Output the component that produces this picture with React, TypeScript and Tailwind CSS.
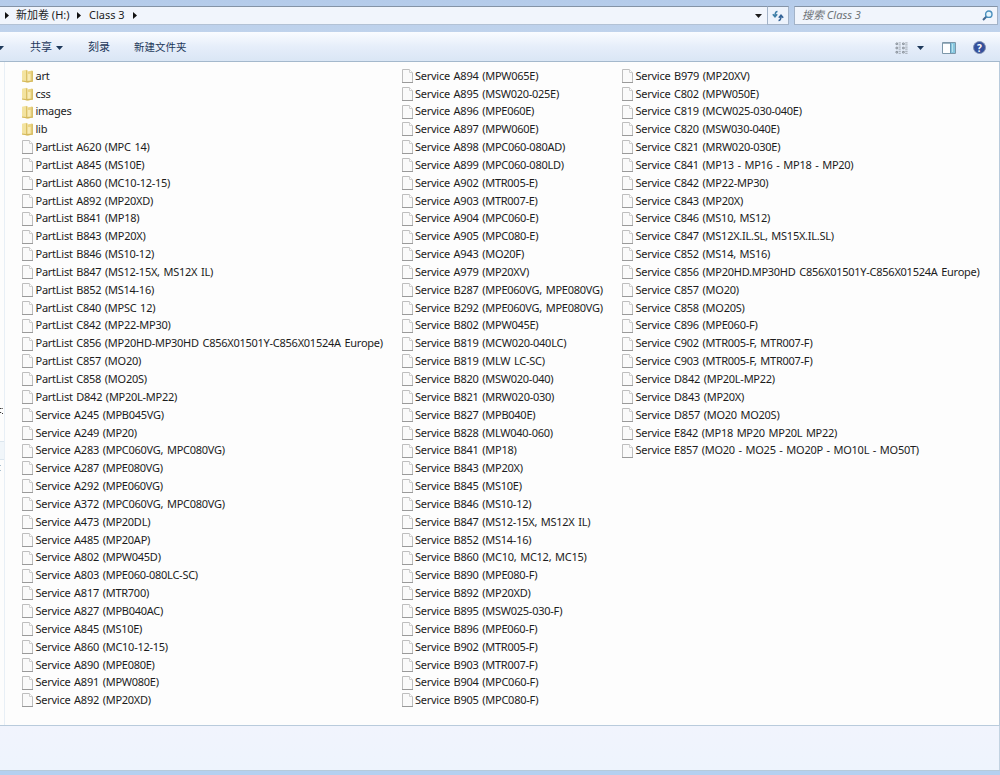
import { useState } from 'react'

const folders = ['art', 'css', 'images', 'lib']

const columns = [
  {
    width: 'w-[379.5px]',
    files: [
      'PartList A620 (MPC 14)',
      'PartList A845 (MS10E)',
      'PartList A860 (MC10-12-15)',
      'PartList A892 (MP20XD)',
      'PartList B841 (MP18)',
      'PartList B843 (MP20X)',
      'PartList B846 (MS10-12)',
      'PartList B847 (MS12-15X, MS12X IL)',
      'PartList B852 (MS14-16)',
      'PartList C840 (MPSC 12)',
      'PartList C842 (MP22-MP30)',
      'PartList C856 (MP20HD-MP30HD C856X01501Y-C856X01524A Europe)',
      'PartList C857 (MO20)',
      'PartList C858 (MO20S)',
      'PartList D842 (MP20L-MP22)',
      'Service A245 (MPB045VG)',
      'Service A249 (MP20)',
      'Service A283 (MPC060VG, MPC080VG)',
      'Service A287 (MPE080VG)',
      'Service A292 (MPE060VG)',
      'Service A372 (MPC060VG, MPC080VG)',
      'Service A473 (MP20DL)',
      'Service A485 (MP20AP)',
      'Service A802 (MPW045D)',
      'Service A803 (MPE060-080LC-SC)',
      'Service A817 (MTR700)',
      'Service A827 (MPB040AC)',
      'Service A845 (MS10E)',
      'Service A860 (MC10-12-15)',
      'Service A890 (MPE080E)',
      'Service A891 (MPW080E)',
      'Service A892 (MP20XD)',
    ],
  },
  {
    width: 'w-[220.5px]',
    files: [
      'Service A894 (MPW065E)',
      'Service A895 (MSW020-025E)',
      'Service A896 (MPE060E)',
      'Service A897 (MPW060E)',
      'Service A898 (MPC060-080AD)',
      'Service A899 (MPC060-080LD)',
      'Service A902 (MTR005-E)',
      'Service A903 (MTR007-E)',
      'Service A904 (MPC060-E)',
      'Service A905 (MPC080-E)',
      'Service A943 (MO20F)',
      'Service A979 (MP20XV)',
      'Service B287 (MPE060VG, MPE080VG)',
      'Service B292 (MPE060VG, MPE080VG)',
      'Service B802 (MPW045E)',
      'Service B819 (MCW020-040LC)',
      'Service B819 (MLW LC-SC)',
      'Service B820 (MSW020-040)',
      'Service B821 (MRW020-030)',
      'Service B827 (MPB040E)',
      'Service B828 (MLW040-060)',
      'Service B841 (MP18)',
      'Service B843 (MP20X)',
      'Service B845 (MS10E)',
      'Service B846 (MS10-12)',
      'Service B847 (MS12-15X, MS12X IL)',
      'Service B852 (MS14-16)',
      'Service B860 (MC10, MC12, MC15)',
      'Service B890 (MPE080-F)',
      'Service B892 (MP20XD)',
      'Service B895 (MSW025-030-F)',
      'Service B896 (MPE060-F)',
      'Service B902 (MTR005-F)',
      'Service B903 (MTR007-F)',
      'Service B904 (MPC060-F)',
      'Service B905 (MPC080-F)',
    ],
  },
  {
    width: 'w-[370px]',
    files: [
      'Service B979 (MP20XV)',
      'Service C802 (MPW050E)',
      'Service C819 (MCW025-030-040E)',
      'Service C820 (MSW030-040E)',
      'Service C821 (MRW020-030E)',
      'Service C841 (MP13 - MP16 - MP18 - MP20)',
      'Service C842 (MP22-MP30)',
      'Service C843 (MP20X)',
      'Service C846 (MS10, MS12)',
      'Service C847 (MS12X.IL.SL, MS15X.IL.SL)',
      'Service C852 (MS14, MS16)',
      'Service C856 (MP20HD.MP30HD C856X01501Y-C856X01524A Europe)',
      'Service C857 (MO20)',
      'Service C858 (MO20S)',
      'Service C896 (MPE060-F)',
      'Service C902 (MTR005-F, MTR007-F)',
      'Service C903 (MTR005-F, MTR007-F)',
      'Service D842 (MP20L-MP22)',
      'Service D843 (MP20X)',
      'Service D857 (MO20 MO20S)',
      'Service E842 (MP18 MP20 MP20L MP22)',
      'Service E857 (MO20 - MO25 - MO20P - MO10L - MO50T)',
    ],
  },
]

function FolderIcon() {
  return (
    <svg className="h-[14px] w-[13px] shrink-0" viewBox="0 0 13 14">
      <path d="M0 1.8 4.5.8v12.4L0 12.4z" fill="#f3e3a0" />
      <path d="M4 1.2h1.5v12H4z" fill="#dcc265" />
      <path d="M5.5 2.5 10.5 1.5v11l-5 1z" fill="#ecd584" />
      <path d="M6 5h2.5v8l-2.5.5z" fill="#f8ebb4" />
      <path d="M9.5 1.8 11 2.3v10l-1.5.5z" fill="#d9c16a" />
      <path d="M0 11.4 4 12l7-.6v1.2l-5.5 1L0 12.6z" fill="#d4b95c" />
    </svg>
  )
}

function FileIcon() {
  return (
    <svg className="h-[14px] w-[13px] shrink-0" viewBox="0 0 13 14">
      <path d="M.5.5h7l3 3v10H.5z" fill="#fafafa" stroke="#bebebe" />
      <path d="M7.5.5v3h3" fill="#fff" stroke="#cfcfcf" />
      <path d="M0 13.5h11" stroke="#9a9a9a" />
    </svg>
  )
}

function Caret({ className = '' }: { className?: string }) {
  return (
    <svg className={`h-1 w-[7px] shrink-0 ${className}`} viewBox="0 0 7 4">
      <path d="M0 0h7L3.5 4z" fill="currentColor" />
    </svg>
  )
}

function Crumb() {
  return (
    <svg className="h-[7px] w-1 shrink-0" viewBox="0 0 4 7">
      <path d="M0 0v7l4-3.5z" fill="#111" />
    </svg>
  )
}

function Item({ name, folder = false }: { name: string; folder?: boolean }) {
  return (
    <li className="flex h-[17.85px] items-center">
      {folder ? <FolderIcon /> : <FileIcon />}
      <span className="ml-[0.5px] whitespace-nowrap">{name}</span>
    </li>
  )
}

export default function App() {
  const [query, setQuery] = useState('')

  return (
    <div className="flex h-[775px] w-[1000px] flex-col overflow-hidden bg-[#bcd0ec] font-['Noto_Sans','Noto_Sans_CJK_SC',sans-serif] text-[11px] text-[#1c1c1c]">
      {/* Address bar */}
      <div className="flex h-8 shrink-0 items-start bg-linear-to-b from-[#b4cbea] to-[#c0d3ec] pt-1.5">
        <div className="flex h-[19px] w-[767px] items-center border-y border-t-[#8493a6] border-b-[#b3c2d5] bg-[#f1f5fc] pl-[5px]">
          <Crumb />
          <span className="ml-[7px] w-[54px] whitespace-nowrap">新加卷 (H:)</span>
          <span className="ml-[7px]"><Crumb /></span>
          <span className="ml-2 w-[36px] whitespace-nowrap">Class 3</span>
          <span className="ml-2"><Crumb /></span>
          <Caret className="mr-[5px] ml-auto" />
        </div>
        <div className="flex h-[19px] w-[22px] items-center justify-center border border-[#a3b3c8] border-t-[#8493a6] bg-[#edf3fc]">
          <svg className="h-3 w-3" viewBox="0 0 12 12" fill="none" stroke="#3f7fa8" strokeWidth="1.5">
            <path d="M5.5 1.5C3.5 1.5 3 3 3 6M.8 4.2 3 6.8l2.2-2.6" />
            <path d="M6.5 10.5C8.5 10.5 9 9 9 6M6.8 7.8 9 5.2l2.2 2.6" stroke="#356498" />
          </svg>
        </div>
        <div className="ml-[5px] flex h-[19px] w-[204px] items-center border border-[#a3b3c8] border-t-[#8493a6] bg-[#f1f5fc] pr-1 pl-[7px]">
          <input
            value={query}
            onChange={(e) => setQuery(e.target.value)}
            placeholder="搜索 Class 3"
            className="min-w-0 flex-1 italic outline-none placeholder:text-[#6e7378]"
          />
          <svg className="h-[11px] w-[11px]" viewBox="0 0 11 11" fill="none">
            <path d="m1 10 3.5-3.5" stroke="#42668e" strokeWidth="2" />
            <circle cx="6.8" cy="4.2" r="3.2" fill="#e6f5fc" stroke="#4a8fbd" strokeWidth="1.4" />
          </svg>
        </div>
      </div>

      {/* Toolbar */}
      <div className="flex h-[30px] shrink-0 items-center border-b border-[#a4b8cc] bg-linear-to-b from-[#fafcff] via-[#e6eefa] to-[#dae6f5] pt-[2px] pr-[14px] text-[#1e395b]">
        <Caret className="-ml-[3px]" />
        <button className="ml-[26px] flex items-center">
          共享
          <Caret className="ml-[4px]" />
        </button>
        <button className="ml-[25px]">刻录</button>
        <button className="ml-[24px] text-[10.5px]">新建文件夹</button>
        <svg className="ml-auto h-3 w-[13px]" viewBox="0 0 13 12" fill="none">
          <path
            d="M1 1h1.6v1.6H1zM1 5.2h1.6v1.6H1zM1 9.4h1.6V11H1zM7.6 1h1.6v1.6H7.6zM7.6 5.2h1.6v1.6H7.6zM7.6 9.4h1.6V11H7.6z"
            stroke="#8b939c"
          />
          <path
            d="M3.6.9h2.2M3.6 2.9h2.2M3.6 5.1h2.2M3.6 7.1h2.2M3.6 9.3h2.2M3.6 11.3h2.2M10.2.9h2.4M10.2 2.9h2.4M10.2 5.1h2.4M10.2 7.1h2.4M10.2 9.3h2.4M10.2 11.3h2.4"
            stroke="#8f979f"
            strokeWidth=".8"
          />
        </svg>
        <Caret className="ml-[9px]" />
        <svg className="ml-[18px] h-3 w-[14px]" viewBox="0 0 14 12">
          <path d="M.5.5h13v11H.5z" fill="#fdfeff" stroke="#7c97a9" />
          <path d="M1 1.5h8" stroke="#9fb2c1" />
          <path d="M9 1h4v10H9z" fill="#86c6de" />
          <path d="M10 2h1v8h-1z" fill="#b9e2ee" />
          <path d="M8.5 1v10" stroke="#6596b4" />
        </svg>
        <span className="ml-[17px] flex h-[13px] w-[13px] items-center justify-center rounded-full border border-[#8391b3] bg-[#34509c] text-[10px] leading-none font-bold text-white">
          ?
        </span>
      </div>

      {/* File list */}
      <div className="flex h-[664px] shrink-0 border-r border-b border-[#b9cbdc] bg-[#fdfdfd]">
        {/* Edge of the navigation pane */}
        <div className="flex w-[5px] shrink-0 flex-col border-r border-[#e8eff6]">
          <svg className="mt-[345px] h-[9px] w-1" viewBox="0 0 4 9">
            <path d="M0 1.5h1M1.5 1.5h1.2M0 5.5h1.2M2 6.5h1" stroke="#3c3c3c" />
          </svg>
          <span className="mt-[25px] h-[19px] border-y border-[#dce6ee] bg-[#f1f6fa]" />
          <svg className="mt-[4px] h-[9px] w-1" viewBox="0 0 4 9">
            <path d="M0 1.5h1M0 6.5h1" stroke="#a9c0cf" />
          </svg>
        </div>
        <div className="flex pt-[5px] pl-[17px] tracking-[-0.26px] [word-spacing:1.1px]">
          {columns.map((column, i) => (
            <ul key={i} className={column.width}>
              {i === 0 && folders.map((name) => <Item key={name} name={name} folder />)}
              {column.files.map((name) => (
                <Item key={name} name={name} />
              ))}
            </ul>
          ))}
        </div>
      </div>

      {/* Details pane */}
      <div className="h-11 shrink-0 border-r border-[#c3d3e2] bg-linear-to-b from-[#f1f4fd] to-[#eef4fd]" />
      <div className="flex-1 border-t border-[#b7cada] bg-[#b4d0f0]" />
    </div>
  )
}
